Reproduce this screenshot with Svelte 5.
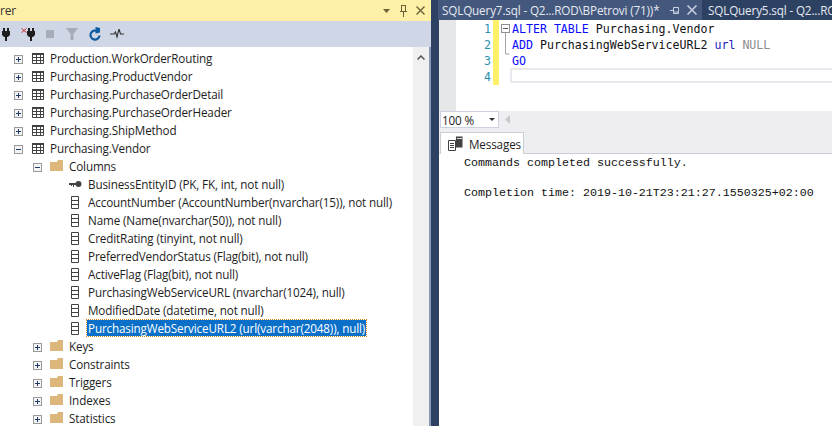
<script>
  const tables = [
    'Production.WorkOrderRouting',
    'Purchasing.ProductVendor',
    'Purchasing.PurchaseOrderDetail',
    'Purchasing.PurchaseOrderHeader',
    'Purchasing.ShipMethod'
  ];
  const columns = [
    { text: 'BusinessEntityID (PK, FK, int, not null)', key: true },
    { text: 'AccountNumber (AccountNumber(nvarchar(15)), not null)' },
    { text: 'Name (Name(nvarchar(50)), not null)' },
    { text: 'CreditRating (tinyint, not null)' },
    { text: 'PreferredVendorStatus (Flag(bit), not null)' },
    { text: 'ActiveFlag (Flag(bit), not null)' },
    { text: 'PurchasingWebServiceURL (nvarchar(1024), null)' },
    { text: 'ModifiedDate (datetime, not null)' },
    { text: 'PurchasingWebServiceURL2 (url(varchar(2048)), null)', selected: true }
  ];
  const folders = ['Keys', 'Constraints', 'Triggers', 'Indexes', 'Statistics'];
</script>

{#snippet expander(minus)}
  <svg class="exp" width="9" height="9" viewBox="0 0 9 9">
    <rect x="0.5" y="0.5" width="8" height="8" fill="#f4f4f6" stroke="#9a9a9a" />
    <path d={minus ? 'M2 4.5h5' : 'M2 4.5h5M4.5 2v5'} stroke="#1e3a66" fill="none" />
  </svg>
{/snippet}

{#snippet tableIcon()}
  <svg class="ico" width="14" height="13" viewBox="0 0 14 13">
    <path d="M1 1h12v11H1z" fill="#fff" />
    <path d="M1.500 1.500h11v10h-11zM1.500 5.500h11M1.500 8.500h11M5.500 1.500v10M9.500 1.500v10" fill="none" stroke="#424242" />
    <path d="M1 1h12v2H1z" fill="#424242" />
  </svg>
{/snippet}

{#snippet folderIcon()}
  <svg class="ico" width="14" height="12" viewBox="0 0 14 12">
    <path d="M0 2h7l1-2h5v11H0z" fill="#dcb67a" />
  </svg>
{/snippet}

{#snippet columnIcon()}
  <svg class="ico" width="9" height="13" viewBox="0 0 9 13">
    <path d="M.5 .5h7v12h-7zM.5 4.500h7M.5 8.500h7" fill="#fff" stroke="#424242" />
  </svg>
{/snippet}

{#snippet keyIcon()}
  <svg class="ico key" width="13" height="9" viewBox="0 0 13 9">
    <circle cx="9.500" cy="4" r="3" fill="#424242" />
    <path d="M0 3h7v2H5v2H4V5H3v1H2V5H0z" fill="#424242" />
  </svg>
{/snippet}

<div class="app">
  <section class="explorer">
    <header class="title">
      <span class="title-text">rer</span>
      <span class="title-btns">
        <svg class="arrow" width="7" height="4" viewBox="0 0 7 4"><path d="M0 0h7L3.500 4z" fill="#6b6237" /></svg>
        <svg width="7" height="12" viewBox="0 0 7 12"><path d="M1 .5h5M1.500 .5v6h4v-6M0 6.500h7M3.500 7v5" fill="none" stroke="#6b6237" /></svg>
        <svg width="9" height="9" viewBox="0 0 9 9"><path d="M.5 .5l8 8M8.500 .5l-8 8" fill="none" stroke="#6b6237" stroke-width="1.400" /></svg>
      </span>
    </header>
    <div class="toolbar">
      <svg width="8" height="13" viewBox="0 0 8 13"><path d="M1 0h2v3h2V0h2v3h1v4L6 9H5v4H3V9H2L0 7V3h1z" fill="#1e1e1e" /></svg>
      <svg width="14" height="13" viewBox="0 0 14 13">
        <path d="M.5 .5l5 4M5.500 .5l-5 4" stroke="#c8342c" fill="none" />
        <path d="M7 0h2v3h2V0h2v3h1v4l-2 2h-1v4H9V9H8L6 7V3h1z" fill="#1e1e1e" />
      </svg>
      <span class="stop"></span>
      <svg class="filter" width="12" height="12" viewBox="0 0 12 12"><path d="M0 0h12L7.500 6v6h-3V6z" fill="#a7adb8" /></svg>
      <svg width="12" height="14" viewBox="0 0 12 14">
        <path d="M8.700 4.400A4.500 4.500 0 1 0 10.500 8.500" fill="none" stroke="#0e5a9e" stroke-width="2.200" />
        <path d="M6.500 0v6.500l4.500-1V1z" fill="#0e5a9e" />
      </svg>
      <svg class="pulse" width="14" height="10" viewBox="0 0 14 10"><path d="M0 5h4l1.500-2 1.500 5 2-8 1.500 5H14" fill="none" stroke="#333" stroke-width="1.100" /></svg>
    </div>
    <div class="body">
      <div class="tree">
        {#each tables as t}
          <div class="row indent0">
            {@render expander(false)}
            {@render tableIcon()}
            <span class="label">{t}</span>
          </div>
        {/each}
        <div class="row indent0">
          {@render expander(true)}
          {@render tableIcon()}
          <span class="label">Purchasing.Vendor</span>
        </div>
        <div class="row indent1">
          {@render expander(true)}
          {@render folderIcon()}
          <span class="label">Columns</span>
        </div>
        {#each columns as c}
          <div class="row indent2">
            <span class="icon-slot">
              {#if c.key}{@render keyIcon()}{:else}{@render columnIcon()}{/if}
            </span>
            <span class="label" class:selected={c.selected}>{c.text}</span>
          </div>
        {/each}
        {#each folders as f}
          <div class="row indent1">
            {@render expander(false)}
            {@render folderIcon()}
            <span class="label">{f}</span>
          </div>
        {/each}
      </div>
      <div class="scrollbar">
        <svg width="8" height="5" viewBox="0 0 8 5"><path d="M.5 4.500L4 1l3.500 3.500" fill="none" stroke="#555" stroke-width="1.500" /></svg>
      </div>
    </div>
  </section>

  <section class="workspace">
    <nav class="tabs">
      <div class="tab active">
        <span class="tab-name">SQLQuery7.sql - Q2...ROD\BPetrovi (71))*</span>
        <svg width="10" height="9" viewBox="0 0 10 9"><path d="M0 4.500h3M3.500 1.500v6M3.500 1.500h5v6h-5M3.500 6h5" fill="none" stroke="#c9d1e0" /></svg>
        <svg width="10" height="10" viewBox="0 0 10 10"><path d="M.5 .5l9 9M9.500 .5l-9 9" fill="none" stroke="#c9d1e0" stroke-width="1.500" /></svg>
      </div>
      <div class="tab"><span>SQLQuery5.sql - Q2...RO</span></div>
    </nav>
    <div class="editor">
      <div class="margin"></div>
      <div class="numbers">
        <div>1</div><div>2</div><div>3</div><div>4</div>
      </div>
      <div class="changebar"></div>
      <div class="fold">
        <svg width="9" height="41" viewBox="0 0 9 41">
          <rect x=".5" y=".5" width="8" height="8" fill="#fff" stroke="#909090" />
          <path d="M2 4.500h5" stroke="#555" />
          <path d="M4.500 9v21h4" fill="none" stroke="#a5a5a5" />
        </svg>
      </div>
      <div class="code">
        <div><span class="kw">ALTER TABLE</span> Purchasing.Vendor</div>
        <div><span class="kw">ADD</span> PurchasingWebServiceURL2 <span class="ty">url</span> <span class="nu">NULL</span></div>
        <div><span class="kw">GO</span></div>
        <div class="current"></div>
      </div>
    </div>
    <div class="statusrow">
      <div class="zoom">
        <span>100 %</span>
        <svg width="6" height="3" viewBox="0 0 6 3"><path d="M0 0h6L3 3z" fill="#333" /></svg>
      </div>
      <svg class="left-arrow" width="5" height="9" viewBox="0 0 5 9"><path d="M5 0v9L0 4.500z" fill="#c8c8cc" /></svg>
    </div>
    <div class="results">
      <div class="msg-tabs">
        <div class="msg-tab">
          <svg width="15" height="15" viewBox="0 0 15 15">
            <path d="M.5 4.500h7v10h-7z" fill="#fff" stroke="#424242" />
            <path d="M2 7.500h4M2 9.500h4M2 11.500h4" stroke="#424242" />
            <path d="M8 .5h6.500v11H8z" fill="#424242" />
            <path d="M9 2.500h5" stroke="#ddd" />
          </svg>
          <span>Messages</span>
        </div>
      </div>
      <pre class="output">Commands completed successfully.

Completion time: 2019-10-21T23:21:27.1550325+02:00</pre>
    </div>
  </section>
</div>

<style>
  :global(body) {
    margin: 0;
    overflow: hidden;
  }

  .app {
    display: flex;
    width: 832px;
    height: 426px;
    overflow: hidden;
    background: #2d4263;
    font-family: "Open Sans", "Noto Sans", sans-serif;
    font-size: 11.7px;
    letter-spacing: -0.15px;
    color: #1e1e1e;
  }

  .explorer {
    width: 431px;
    flex-shrink: 0;
    display: flex;
    flex-direction: column;
    background: #fff;
  }

  .title {
    height: 21px;
    flex-shrink: 0;
    background: #fdf0a6;
    display: flex;
    align-items: center;
    justify-content: space-between;
    padding-right: 6px;
  }

  .title-text {
    color: #333;
    font-size: 12px;
  }

  .title-btns {
    display: flex;
    align-items: center;
    gap: 9px;
  }

  .title-btns .arrow {
    margin-right: 1px;
  }

  .toolbar {
    height: 26px;
    flex-shrink: 0;
    background: #cfd6e5;
    display: flex;
    align-items: center;
    gap: 11px;
    padding-left: 2px;
  }

  .stop {
    width: 8px;
    height: 8px;
    background: #a7adb8;
  }

  .filter {
    margin-left: 1px;
  }

  .pulse {
    margin-left: -2px;
  }

  .body {
    flex: 1;
    min-height: 0;
    display: flex;
    border-right: 2px solid #8a97b4;
  }

  .tree {
    flex: 1;
    min-width: 0;
    padding-top: 2px;
    overflow: hidden;
  }

  .row {
    height: 18px;
    display: flex;
    align-items: center;
    white-space: nowrap;
  }

  .indent0 { padding-left: 14px; }
  .indent1 { padding-left: 33px; }
  .indent2 { padding-left: 69px; }

  .exp {
    flex-shrink: 0;
    margin: 3px 8px 0 0;
  }

  .ico {
    flex-shrink: 0;
  }

  .ico.key {
    margin-top: 1px;
  }

  .icon-slot {
    width: 13px;
    margin-right: 1px;
    display: flex;
    justify-content: center;
  }

  .label {
    margin-left: 4px;
    line-height: 16px;
    padding: 0 1px;
  }

  .label.selected {
    background: #0a6fc9;
    color: #fff;
    outline: 1px dotted #d9861c;
  }

  .scrollbar {
    width: 16px;
    flex-shrink: 0;
    background: #f0f0f0;
    display: flex;
    justify-content: center;
    padding-top: 8px;
    box-sizing: border-box;
  }

  .scrollbar svg {
    display: block;
  }

  .workspace {
    flex: 1;
    min-width: 0;
    display: flex;
    flex-direction: column;
    margin-left: 8px;
  }

  .tabs {
    height: 20px;
    flex-shrink: 0;
    display: flex;
    margin-left: -1px;
    color: #e6eaf2;
    white-space: nowrap;
  }

  .tab {
    display: flex;
    align-items: center;
    padding: 0 6px;
    flex-shrink: 0;
  }

  .tab.active {
    background: #44587e;
    width: 264px;
    box-sizing: border-box;
    padding: 0 5px 0 4px;
    gap: 7px;
  }

  .tab-name {
    flex: 1;
  }

  .editor {
    height: 91px;
    flex-shrink: 0;
    display: flex;
    background: #fff;
    font-family: "DejaVu Sans Mono", monospace;
    font-size: 11.6px;
    letter-spacing: 0;
    line-height: 16px;
  }

  .margin {
    width: 17px;
    background: #e6e7e8;
  }

  .numbers {
    width: 37px;
    padding-top: 1px;
    padding-right: 2px;
    box-sizing: border-box;
    text-align: right;
    color: #2b91af;
  }

  .changebar {
    width: 6px;
    height: 65px;
    background: #fff06a;
  }

  .fold {
    width: 13px;
    padding: 4px 0 0 2px;
    box-sizing: border-box;
  }

  .code {
    flex: 1;
    padding-top: 1px;
    color: #111;
  }

  .kw { color: #0a0aff; }
  .ty { color: #2020c0; }
  .nu { color: #8c8c8c; }

  .current {
    margin: -1px 0 0 -2px;
    height: 11px;
    border: 2px solid #e9e9f0;
    border-right: none;
  }

  .statusrow {
    height: 17px;
    flex-shrink: 0;
    display: flex;
    align-items: center;
    background: #eeeef2;
    gap: 6px;
  }

  .zoom {
    width: 59px;
    height: 17px;
    margin-left: 1px;
    box-sizing: border-box;
    border: 1px solid #ccd2e0;
    background: #fff;
    display: flex;
    align-items: center;
    justify-content: space-between;
    padding: 0 3px 0 1px;
  }

  .results {
    flex: 1;
    min-height: 0;
    display: flex;
    flex-direction: column;
    background: #fff;
  }

  .msg-tabs {
    height: 26px;
    flex-shrink: 0;
    background: #eeeef2;
    display: flex;
    align-items: flex-end;
    border-bottom: 1px solid #ccced6;
    box-sizing: border-box;
  }

  .msg-tab {
    height: 22px;
    width: 84px;
    margin-left: 1px;
    margin-bottom: -1px;
    box-sizing: border-box;
    background: #fff;
    border: 1px solid #ccced6;
    border-bottom: none;
    display: flex;
    align-items: center;
    gap: 6px;
    padding-left: 7px;
  }

  .output {
    margin: 0;
    padding: 2px 0 0 25px;
    font-family: "Liberation Mono", monospace;
    font-size: 11.67px;
    letter-spacing: 0;
    line-height: 15px;
    color: #111;
  }
</style>
